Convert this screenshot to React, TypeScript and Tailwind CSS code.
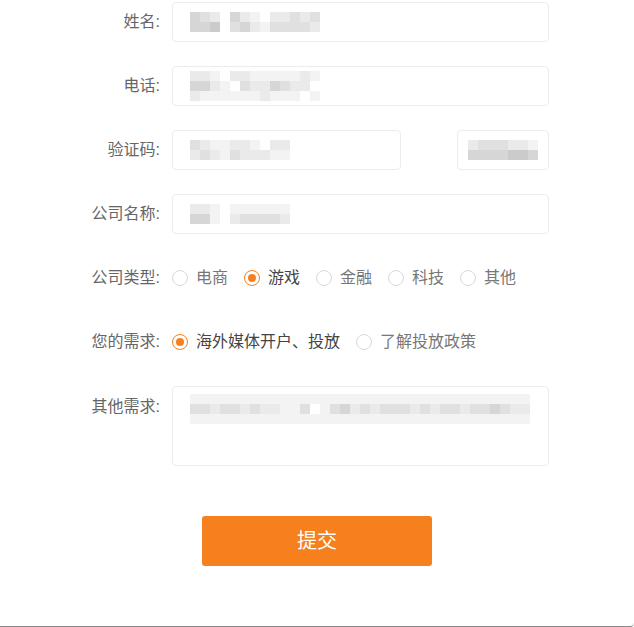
import React from 'react';

// shade key -> class, for the blurred placeholders
const shade: Record<string, string> = {
  a: 'bg-[#cbcbcb]',
  b: 'bg-[#d6d6d6]',
  c: 'bg-[#e0e0e0]',
  d: 'bg-[#eaeaea]',
  e: 'bg-[#f3f3f3]',
  '.': 'bg-transparent',
};

const Mosaic = ({ rows }: { rows: string[] }) => (
  <div className="flex flex-col">
    {rows.map((row, i) => (
      <div key={i} className="flex">
        {row.split('').map((k, j) => (
          <div key={j} className={`w-[10px] h-[10px] ${shade[k]}`} />
        ))}
      </div>
    ))}
  </div>
);

const Label = ({ children }: { children: React.ReactNode }) => (
  <div className="w-[160px] shrink-0 text-right text-[16px] text-[#666]">{children}</div>
);

const Radio = ({ label, checked }: { label: string; checked?: boolean }) => (
  <div className="flex items-center mr-[16px]">
    <span
      className={`w-[16px] h-[16px] rounded-full border flex items-center justify-center ${
        checked ? 'border-[#f7801e]' : 'border-[#d9d9d9]'
      }`}
    >
      {checked && <span className="w-[8px] h-[8px] rounded-full bg-[#f7801e]" />}
    </span>
    <span className={`ml-[8px] text-[16px] ${checked ? 'text-[#444]' : 'text-[#777]'}`}>{label}</span>
  </div>
);

const App = () => {
  return (
    <div
      className="w-[634px] h-[627px] bg-white border-b border-[#8a8a8a] rounded-br-[4px] overflow-hidden"
      style={{ fontFamily: '"Liberation Sans", "Noto Sans CJK SC", sans-serif' }}
    >
      <div className="pt-[2px] flex flex-col gap-[24px]">
        {/* 姓名 */}
        <div className="flex items-center gap-[12px]">
          <Label>姓名:</Label>
          <div className="w-[377px] h-[40px] border border-[#ececec] rounded-[4px] flex items-center pl-[17px]">
            <Mosaic rows={['bcd.bde.ddcdc', 'bba.cbdeccccd']} />
          </div>
        </div>

        {/* 电话 */}
        <div className="flex items-center gap-[12px]">
          <Label>电话:</Label>
          <div className="w-[377px] h-[40px] border border-[#ececec] rounded-[4px] flex items-center pl-[17px]">
            <Mosaic rows={['dde.ddeeeeede', 'bbde.cddbcdd', 'deeeeeedeee.e']} />
          </div>
        </div>

        {/* 验证码 */}
        <div className="flex items-center gap-[12px]">
          <Label>验证码:</Label>
          <div className="w-[229px] h-[40px] border border-[#ececec] rounded-[4px] flex items-center pl-[17px]">
            <Mosaic rows={['cdeedde.dd', 'dcdecdddee']} />
          </div>
          <div className="ml-[44px] w-[92px] h-[40px] border border-[#ececec] rounded-[4px] flex items-center justify-center">
            <Mosaic rows={['dcccdde', 'bbbbaab']} />
          </div>
        </div>

        {/* 公司名称 */}
        <div className="flex items-center gap-[12px]">
          <Label>公司名称:</Label>
          <div className="w-[377px] h-[40px] border border-[#ececec] rounded-[4px] flex items-center pl-[17px]">
            <Mosaic rows={['dde.eeeeee', 'bbe.dccccd']} />
          </div>
        </div>

        {/* 公司类型 */}
        <div className="flex items-center gap-[12px] h-[40px]">
          <Label>公司类型:</Label>
          <div className="flex items-center">
            <Radio label="电商" />
            <Radio label="游戏" checked />
            <Radio label="金融" />
            <Radio label="科技" />
            <Radio label="其他" />
          </div>
        </div>

        {/* 您的需求 */}
        <div className="flex items-center gap-[12px] h-[40px]">
          <Label>您的需求:</Label>
          <div className="flex items-center">
            <Radio label="海外媒体开户、投放" checked />
            <Radio label="了解投放政策" />
          </div>
        </div>

        {/* 其他需求 */}
        <div className="flex items-start gap-[12px]">
          <div className="pt-[9px]">
            <Label>其他需求:</Label>
          </div>
          <div className="w-[377px] h-[80px] border border-[#ececec] rounded-[4px] pl-[17px] pt-[7px]">
            <Mosaic
              rows={[
                'eeeeeeeeeeeeeeeeeeeeeeeeeeeeeeeeee',
                'ccdccdcddeec.ecbdcdcccdcdccdccbcdd',
                'eeeeeeeeeeeeeeeeeeeeeeeeeeeeeeeeee',
              ]}
            />
          </div>
        </div>
      </div>

      <div className="mt-[50px] pl-[202px]">
        <button className="w-[230px] h-[50px] rounded-[3px] bg-[#f7801e] text-white text-[20px]">提交</button>
      </div>
    </div>
  );
};

export default App;
